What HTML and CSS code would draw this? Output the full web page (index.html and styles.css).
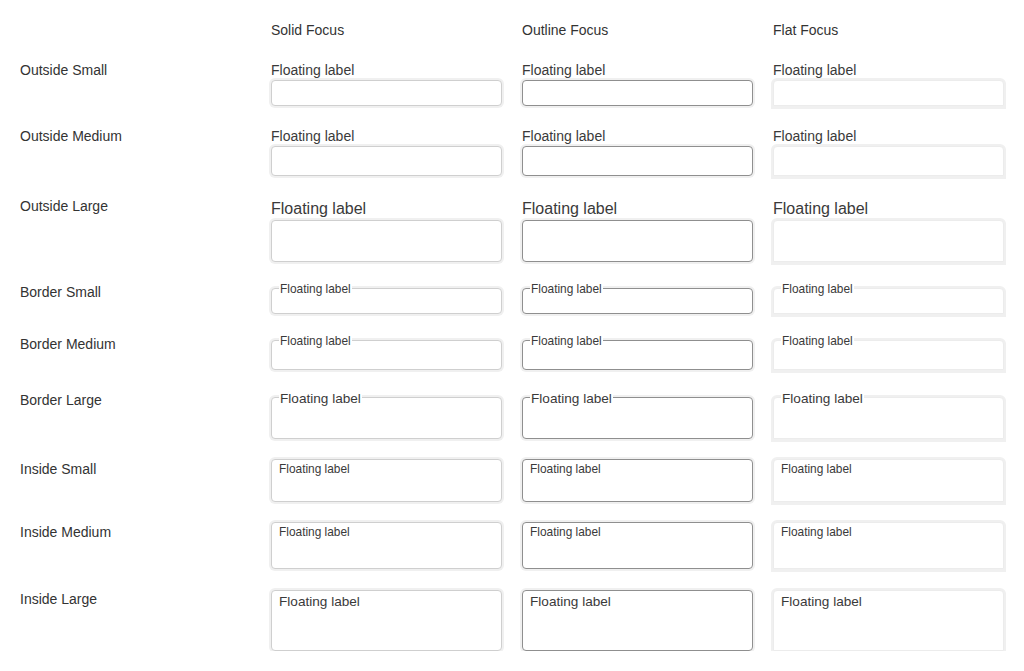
FILE: index.html
```html
<!DOCTYPE html>
<html lang="en">
<head>
<meta charset="utf-8">
<title>Floating labels</title>
<link rel="stylesheet" href="styles.css">
</head>
<body>
<div class="grid">
  <div class="hd"></div>
  <div class="hd">Solid Focus</div>
  <div class="hd">Outline Focus</div>
  <div class="hd">Flat Focus</div>

  <div class="rl">Outside Small</div>
  <div class="cell out"><div class="fl">Floating label</div><div class="box solid h-sm"></div></div>
  <div class="cell out"><div class="fl">Floating label</div><div class="box outline h-sm"></div></div>
  <div class="cell out"><div class="fl">Floating label</div><div class="box flat h-sm"></div></div>

  <div class="rl">Outside Medium</div>
  <div class="cell out"><div class="fl">Floating label</div><div class="box solid h-md"></div></div>
  <div class="cell out"><div class="fl">Floating label</div><div class="box outline h-md"></div></div>
  <div class="cell out"><div class="fl">Floating label</div><div class="box flat h-md"></div></div>

  <div class="rl">Outside Large</div>
  <div class="cell out lg"><div class="fl">Floating label</div><div class="box solid h-lg"></div></div>
  <div class="cell out lg"><div class="fl">Floating label</div><div class="box outline h-lg"></div></div>
  <div class="cell out lg"><div class="fl">Floating label</div><div class="box flat h-lg"></div></div>

  <div class="rl">Border Small</div>
  <div class="cell bd"><div class="box solid h-sm"><span class="lgd">Floating label</span></div></div>
  <div class="cell bd"><div class="box outline h-sm"><span class="lgd">Floating label</span></div></div>
  <div class="cell bd"><div class="box flat h-sm"><span class="lgd">Floating label</span></div></div>

  <div class="rl">Border Medium</div>
  <div class="cell bd"><div class="box solid h-md"><span class="lgd">Floating label</span></div></div>
  <div class="cell bd"><div class="box outline h-md"><span class="lgd">Floating label</span></div></div>
  <div class="cell bd"><div class="box flat h-md"><span class="lgd">Floating label</span></div></div>

  <div class="rl">Border Large</div>
  <div class="cell bd lg"><div class="box solid h-lg"><span class="lgd">Floating label</span></div></div>
  <div class="cell bd lg"><div class="box outline h-lg"><span class="lgd">Floating label</span></div></div>
  <div class="cell bd lg"><div class="box flat h-lg"><span class="lgd">Floating label</span></div></div>

  <div class="rl">Inside Small</div>
  <div class="cell"><div class="box solid in"><div class="il">Floating label</div><div class="ia ia-sm"></div></div></div>
  <div class="cell"><div class="box outline in"><div class="il">Floating label</div><div class="ia ia-sm"></div></div></div>
  <div class="cell"><div class="box flat in"><div class="il">Floating label</div><div class="ia ia-sm"></div></div></div>

  <div class="rl">Inside Medium</div>
  <div class="cell"><div class="box solid in"><div class="il">Floating label</div><div class="ia ia-md"></div></div></div>
  <div class="cell"><div class="box outline in"><div class="il">Floating label</div><div class="ia ia-md"></div></div></div>
  <div class="cell"><div class="box flat in"><div class="il">Floating label</div><div class="ia ia-md"></div></div></div>

  <div class="rl">Inside Large</div>
  <div class="cell lg in-lg"><div class="box solid in"><div class="il">Floating label</div><div class="ia ia-lg"></div></div></div>
  <div class="cell lg in-lg"><div class="box outline in"><div class="il">Floating label</div><div class="ia ia-lg"></div></div></div>
  <div class="cell lg in-lg"><div class="box flat in"><div class="il">Floating label</div><div class="ia ia-lg"></div></div></div>
</div>
</body>
</html>
```

FILE: styles.css
```css
html, body {
  margin: 0;
  padding: 0;
  background: #ffffff;
}

body {
  font-family: "Liberation Sans", Arial, sans-serif;
  color: #333333;
  font-size: 14px;
}

.grid {
  display: grid;
  grid-template-columns: repeat(4, 231px);
  column-gap: 20px;
  row-gap: 20px;
  padding: 20px 0 0 20px;
  align-items: start;
}

.hd {
  font-size: 14px;
  line-height: 16px;
  padding: 2px 0 2px;
  min-height: 16px;
}

.rl {
  font-size: 14px;
  line-height: 16px;
  margin-top: 2px;
}

.out {
  padding-top: 2px;
}

.fl {
  font-size: 14px;
  line-height: 16px;
  margin-bottom: 2px;
  color: #3a3a3a;
}

.out.lg .fl {
  font-size: 16px;
  line-height: 22px;
  margin-bottom: 0;
}

.box {
  position: relative;
  box-sizing: border-box;
  background: #ffffff;
  border-radius: 4px;
}

.solid {
  border: 1px solid #cfcfcf;
  box-shadow: 0 0 0 2px #f0f0f0;
}

.outline {
  border: 1px solid #8f8f8f;
  box-shadow: 0 0 0 2px #f0f0f0;
}

.flat {
  border: 1px solid #ececec;
  border-radius: 4px 4px 0 0;
  box-shadow: 0 0 0 2px #f0f0f0, 0 1px 0 2px #f0f0f0;
}

.h-sm { height: 26px; }
.h-md { height: 30px; }
.h-lg { height: 42px; }

.bd {
  padding-top: 6px;
}

.bd.lg {
  padding-top: 7px;
}

.lgd {
  position: absolute;
  left: 7px;
  top: 0;
  transform: translateY(-50%);
  background: #ffffff;
  padding: 0 1px;
  font-size: 11.9px;
  line-height: 14px;
  color: #3a3a3a;
  white-space: nowrap;
}

.bd.lg .lgd {
  top: 1px;
  font-size: 13.6px;
  line-height: 16px;
}

.in {
  padding: 2px 0 0 7px;
}

.il {
  font-size: 11.9px;
  line-height: 15px;
  color: #3a3a3a;
}

.in-lg .in {
  padding-top: 3px;
  margin-top: 1px;
}

.lg .il {
  font-size: 13.6px;
  line-height: 16px;
}

.ia-sm { height: 24px; }
.ia-md { height: 28px; }
.ia-lg { height: 40px; }
```
